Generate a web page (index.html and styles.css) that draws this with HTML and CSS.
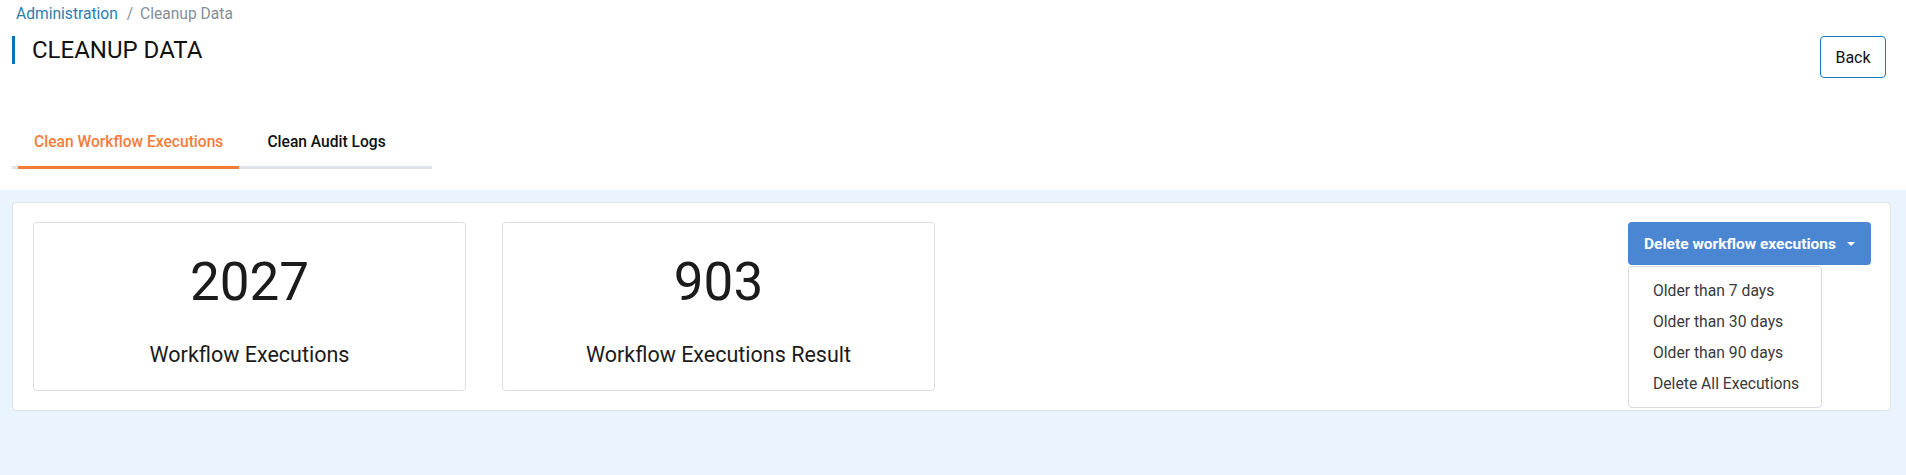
FILE: index.html
```html
<!DOCTYPE html>
<html lang="en">
<head>
<meta charset="utf-8">
<title>Cleanup Data</title>
<link rel="stylesheet" href="styles.css">
</head>
<body>
  <header class="page-header">
    <nav class="breadcrumb">
      <a class="crumb-link" href="#">Administration</a>
      <span class="crumb-sep">/</span>
      <span class="crumb-current">Cleanup Data</span>
    </nav>
    <div class="title-row">
      <h1 class="page-title">CLEANUP DATA</h1>
      <button class="btn-back" type="button">Back</button>
    </div>
    <div class="tabs">
      <a class="tab tab-active" href="#">Clean Workflow Executions</a>
      <a class="tab" href="#">Clean Audit Logs</a>
    </div>
  </header>
  <main class="content">
    <section class="panel">
      <div class="stats">
        <div class="stat-card">
          <div class="stat-value">2027</div>
          <div class="stat-label">Workflow Executions</div>
        </div>
        <div class="stat-card">
          <div class="stat-value">903</div>
          <div class="stat-label">Workflow Executions Result</div>
        </div>
      </div>
      <div class="dropdown">
        <button class="btn-delete" type="button">Delete workflow executions <span class="caret"></span></button>
        <ul class="dropdown-menu">
          <li class="menu-item">Older than 7 days</li>
          <li class="menu-item">Older than 30 days</li>
          <li class="menu-item">Older than 90 days</li>
          <li class="menu-item">Delete All Executions</li>
        </ul>
      </div>
    </section>
  </main>
</body>
</html>
```
FILE: styles.css
```css
* { box-sizing: border-box; }
html, body { margin: 0; padding: 0; }
body {
  font-family: Roboto, "Liberation Sans", Arial, sans-serif;
  color: #212529;
  background: #eaf4fe;
  min-height: 475px;
}
.page-header {
  background: #fff;
  padding: 4px 20px 21px 12px;
}
.breadcrumb {
  font-size: 15.6px;
  line-height: 20px;
  padding-left: 4px;
  color: #868e96;
}
.crumb-link { color: #2a7db3; text-decoration: none; }
.crumb-sep { margin: 0 3px 0 5px; color: #8a9198; }
.crumb-current { color: #868e96; }
.title-row {
  display: flex;
  justify-content: space-between;
  align-items: flex-start;
  margin-top: 12px;
}
.page-title {
  margin: 0;
  font-size: 24px;
  font-weight: 400;
  line-height: 28px;
  color: #111;
  border-left: 3px solid #0a74b9;
  padding-left: 17px;
}
.btn-back {
  font-family: inherit;
  font-size: 16px;
  color: #111;
  background: #fff;
  border: 1px solid #1a7cc0;
  border-radius: 4px;
  height: 42px;
  width: 66px;
  padding: 0;
}
.tabs {
  display: flex;
  gap: 12px;
  width: 420px;
  margin-top: 40px;
  padding-left: 6px;
  border-bottom: 3px solid #dfe2e6;
}
.tab {
  font-size: 15.6px;
  font-weight: 500;
  line-height: 20px;
  color: #111;
  text-decoration: none;
  padding: 14px 16px;
  margin-bottom: -3px;
  border-bottom: 3px solid transparent;
}
.tab-active {
  color: #f57c3a;
  border-bottom-color: #f47b36;
}
.content {
  padding: 12px 15px 12px 12px;
}
.panel {
  display: flex;
  justify-content: space-between;
  align-items: flex-start;
  background: #fff;
  border: 1px solid #dde2e7;
  border-radius: 4px;
  padding: 19px 19px 19px 20px;
}
.stats {
  display: flex;
  gap: 36px;
}
.stat-card {
  width: 433px;
  height: 169px;
  border: 1px solid #dcdfe3;
  border-radius: 4px;
  padding-top: 27px;
  text-align: center;
  color: #1b1b1b;
}
.stat-value {
  font-size: 53px;
  line-height: 64px;
}
.stat-label {
  font-size: 21.5px;
  line-height: 26px;
  margin-top: 28px;
}
.dropdown {
  position: relative;
}
.btn-delete {
  display: flex;
  align-items: center;
  font-family: inherit;
  font-size: 15.5px;
  font-weight: 700;
  color: #fff;
  background: #4a86d1;
  border: none;
  border-radius: 4px;
  height: 43px;
  width: 243px;
  padding: 0 0 0 16px;
}
.caret {
  width: 0;
  height: 0;
  border-left: 4px solid transparent;
  border-right: 4px solid transparent;
  border-top: 4px solid #fff;
  margin-left: 11px;
}
.dropdown-menu {
  position: absolute;
  top: 44px;
  left: 0;
  width: 194px;
  margin: 0;
  padding: 8px 0;
  list-style: none;
  background: #fff;
  border: 1px solid #d9dde1;
  border-radius: 4px;
}
.menu-item {
  font-size: 15.7px;
  line-height: 31px;
  padding-left: 24px;
  color: #3a3a3a;
  white-space: nowrap;
}
```
